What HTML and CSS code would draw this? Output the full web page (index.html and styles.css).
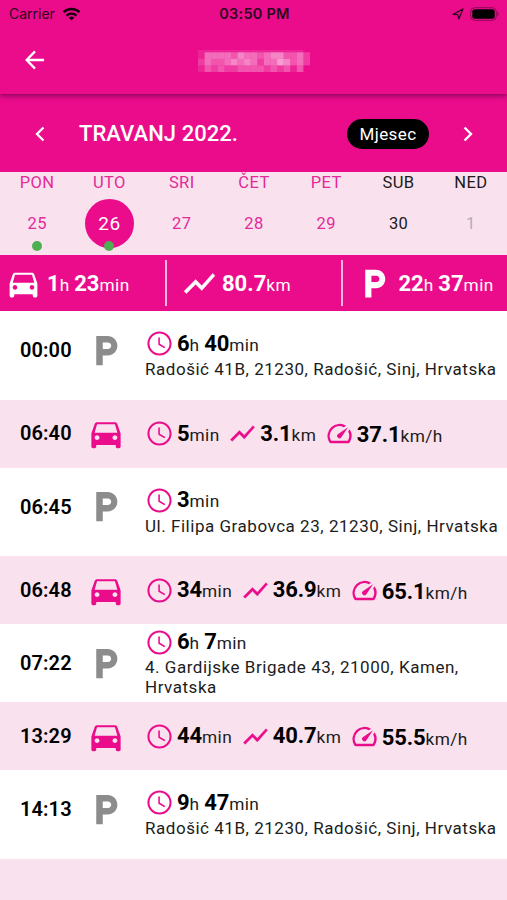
FILE: index.html
```
<!DOCTYPE html>
<html lang="hr">
<head>
<meta charset="utf-8">
<title>Travanj 2022.</title>
<link rel="stylesheet" href="styles.css">
</head>
<body>
<svg class="defs" aria-hidden="true">
  <symbol id="car" viewBox="0 0 24 24"><path d="M18.92 6.01C18.72 5.42 18.16 5 17.5 5h-11c-.66 0-1.21.42-1.42 1.01L3 12v8c0 .55.45 1 1 1h1c.55 0 1-.45 1-1v-1h12v1c0 .55.45 1 1 1h1c.55 0 1-.45 1-1v-8l-2.08-5.99zM6.5 16c-.83 0-1.5-.67-1.5-1.5S5.67 13 6.5 13s1.5.67 1.5 1.5S7.33 16 6.5 16zm11 0c-.83 0-1.5-.67-1.5-1.5s.67-1.5 1.5-1.5 1.5.67 1.5 1.5-.67 1.5-1.5 1.5zM5 11.5l1.5-5.2h11L19 11.5H5z"/></symbol>
  <symbol id="parking" viewBox="0 0 24 24"><path d="M13 3H6v18h4v-6h3c3.31 0 6-2.69 6-6s-2.69-6-6-6zm.2 8H10V7h3.2c1.1 0 2 .9 2 2s-.9 2-2 2z"/></symbol>
  <symbol id="clock" viewBox="0 0 24 24"><path d="M12 2C6.5 2 2 6.5 2 12s4.5 10 10 10 10-4.500 10-10S17.500 2 12 2zm0 18.300c-4.600 0-8.300-3.700-8.300-8.300S7.400 3.700 12 3.700s8.300 3.700 8.300 8.300-3.700 8.300-8.300 8.300zM12.300 7H11v6l5 3 .8-1.200-4.500-2.600z"/></symbol>
  <symbol id="chart" viewBox="0 0 24 24"><path d="M3.500 18.490l6-6.010 4 4L22 6.920l-1.410-1.410-7.090 7.970-4-4L2 16.990z" stroke="currentColor" stroke-width=".3"/></symbol>
  <symbol id="speed" viewBox="0 0 24 24"><path d="M20.380 8.570l-1.230 1.850a8 8 0 0 1-.22 7.580H5.070A8 8 0 0 1 15.580 6.850l1.850-1.230A10 10 0 0 0 3.350 19a2 2 0 0 0 1.720 1h13.850a2 2 0 0 0 1.740-1 10 10 0 0 0-.27-10.440zm-9.790 6.840a2 2 0 0 0 2.830 0l5.660-8.490-8.490 5.660a2 2 0 0 0 0 2.830z"/></symbol>
</svg>

<header class="app-bar">
  <div class="status">
    <div class="carrier">Carrier
      <svg class="wifi" viewBox="0 0 18 14"><g fill="none" stroke="currentColor" stroke-width="2.400"><path d="M1 5.200a11.500 11.500 0 0 1 16 0"/><path d="M4 8.600a7.200 7.200 0 0 1 10 0"/></g><path d="M9 13.500L6.200 10.800a4 4 0 0 1 5.600 0z"/></svg>
    </div>
    <div class="time">03:50 PM</div>
    <div class="indicators">
      <svg class="location" viewBox="0 0 12 12"><path d="M1 6.400L11 1 6.800 11 5.800 6.700z" fill="none" stroke="currentColor" stroke-width="1.200" stroke-linejoin="round"/></svg>
      <svg class="battery" viewBox="0 0 30 14"><rect x=".7" y=".7" width="25.600" height="12.600" rx="4" fill="none" stroke="currentColor" stroke-opacity=".4"/><rect x="2.300" y="2.300" width="22.400" height="9.400" rx="2.500"/><path d="M27.500 5v4c1.600-.7 1.600-3.300 0-4z" opacity=".45"/></svg>
    </div>
  </div>
  <div class="title-bar">
    <svg class="back" viewBox="0 0 22 22"><path d="M21 11H2M11 1.500L1.800 11l9.200 9.500" fill="none" stroke="currentColor" stroke-width="2.500"/></svg>
    <svg class="redacted" id="redacted" viewBox="0 -.35 17 3.35" preserveAspectRatio="none"></svg>
  </div>
</header>

<section class="month">
  <svg class="chevron" viewBox="0 0 10 16"><path d="M8.500 1.500L2 8l6.500 6.500"/></svg>
  <h1>TRAVANJ 2022.</h1>
  <button class="mode">Mjesec</button>
  <svg class="chevron" viewBox="0 0 10 16"><path d="M1.500 1.500L8 8l-6.500 6.500"/></svg>
</section>

<section class="week">
  <div class="day marked"><span class="name">PON</span><span class="num">25</span></div>
  <div class="day marked selected"><span class="name">UTO</span><span class="num">26</span></div>
  <div class="day"><span class="name">SRI</span><span class="num">27</span></div>
  <div class="day"><span class="name">ČET</span><span class="num">28</span></div>
  <div class="day"><span class="name">PET</span><span class="num">29</span></div>
  <div class="day weekend"><span class="name">SUB</span><span class="num">30</span></div>
  <div class="day weekend outside"><span class="name">NED</span><span class="num">1</span></div>
</section>

<section class="summary">
  <div class="total drive"><svg><use href="#car"/></svg><span><b>1</b>h <b>23</b>min</span></div>
  <div class="total distance"><svg><use href="#chart"/></svg><span><b>80.7</b>km</span></div>
  <div class="total parked"><svg><use href="#parking"/></svg><span><b>22</b>h <b>37</b>min</span></div>
</section>

<main class="log">
  <article class="entry stop"><time>00:00</time><svg class="kind"><use href="#parking"/></svg>
    <div class="info"><div class="stats"><svg><use href="#clock"/></svg><span><b>6</b>h <b>40</b>min</span></div><p>Radošić 41B, 21230, Radošić, Sinj, Hrvatska</p></div></article>
  <article class="entry trip"><time>06:40</time><svg class="kind"><use href="#car"/></svg>
    <div class="stats"><svg><use href="#clock"/></svg><span><b>5</b>min</span><svg><use href="#chart"/></svg><span><b>3.1</b>km</span><svg><use href="#speed"/></svg><span class="velocity"><b>37.1</b>km/h</span></div></article>
  <article class="entry stop"><time>06:45</time><svg class="kind"><use href="#parking"/></svg>
    <div class="info"><div class="stats"><svg><use href="#clock"/></svg><span><b>3</b>min</span></div><p>Ul. Filipa Grabovca 23, 21230, Sinj, Hrvatska</p></div></article>
  <article class="entry trip"><time>06:48</time><svg class="kind"><use href="#car"/></svg>
    <div class="stats"><svg><use href="#clock"/></svg><span><b>34</b>min</span><svg><use href="#chart"/></svg><span><b>36.9</b>km</span><svg><use href="#speed"/></svg><span class="velocity"><b>65.1</b>km/h</span></div></article>
  <article class="entry stop tall"><time>07:22</time><svg class="kind"><use href="#parking"/></svg>
    <div class="info"><div class="stats"><svg><use href="#clock"/></svg><span><b>6</b>h <b>7</b>min</span></div><p>4. Gardijske Brigade 43, 21000, Kamen, Hrvatska</p></div></article>
  <article class="entry trip"><time>13:29</time><svg class="kind"><use href="#car"/></svg>
    <div class="stats"><svg><use href="#clock"/></svg><span><b>44</b>min</span><svg><use href="#chart"/></svg><span><b>40.7</b>km</span><svg><use href="#speed"/></svg><span class="velocity"><b>55.5</b>km/h</span></div></article>
  <article class="entry stop"><time>14:13</time><svg class="kind"><use href="#parking"/></svg>
    <div class="info"><div class="stats"><svg><use href="#clock"/></svg><span><b>9</b>h <b>47</b>min</span></div><p>Radošić 41B, 21230, Radošić, Sinj, Hrvatska</p></div></article>
</main>
<script src="mosaic.js"></script>
</body>
</html>
```
FILE: mosaic.js
```
// Opacity of each cell of the obscured title, one digit per cell.
const rows = [
  { y: -0.35, height: 0.35, levels: "11111111111111110" },
  { y: 0, height: 1, levels: "14444354434553342" },
  { y: 1, height: 1, levels: "24334545424465342" },
  { y: 2, height: 1, levels: "13232233332323130" },
];
const target = document.getElementById("redacted");
for (const { y, height, levels } of rows) {
  [...levels].forEach((level, x) => {
    const cell = document.createElementNS("http://www.w3.org/2000/svg", "rect");
    cell.setAttribute("x", x);
    cell.setAttribute("y", y);
    cell.setAttribute("width", 1);
    cell.setAttribute("height", height);
    cell.setAttribute("fill-opacity", level / 10);
    target.append(cell);
  });
}
```
FILE: styles.css
```
:root {
  --pink: #eb0c8c;
  --pale: #f9e2ee;
}

* { box-sizing: border-box; }

body {
  margin: 0;
  height: 900px;
  overflow: hidden;
  background: var(--pale);
  color: #1c1c1c;
  font-family: Roboto, "Liberation Sans", sans-serif;
}

svg { fill: currentColor; flex: none; }
.defs { display: none; }

.app-bar {
  position: relative;
  height: 94px;
  background: var(--pink);
  box-shadow: 0 2px 5px rgba(70, 0, 60, .6);
}

.status {
  display: grid;
  grid-template-columns: 1fr auto 1fr;
  align-items: center;
  height: 27px;
  padding: 0 7px 0 9px;
  color: #2b0820;
  font: 14px Inter, sans-serif;
}
.carrier { display: flex; align-items: center; gap: 7px; }
.wifi { width: 19px; height: 14px; color: #16000d; }
.time { font-size: 14.5px; font-weight: 600; letter-spacing: .25px; }
.indicators { display: flex; align-items: center; justify-content: flex-end; gap: 6px; }
.location { width: 12px; height: 12px; }
.battery { width: 30px; height: 14px; color: #000; }

.title-bar {
  display: grid;
  grid-template-columns: 60px 1fr 60px;
  align-items: center;
  height: 66px;
  color: #fff;
}
.back { width: 20px; height: 20px; margin-left: 25px; }
.redacted { width: 112px; height: 22px; margin-top: 2px; justify-self: center; }

.month {
  display: flex;
  align-items: center;
  height: 78px;
  padding: 1px 34px 0 35px;
  background: var(--pink);
  color: #fff;
}
.chevron { width: 10px; height: 16px; fill: none; stroke: #fff; stroke-width: 2.3; }
.month h1 { margin: 0 auto 0 34px; font-size: 22px; font-weight: 500; letter-spacing: .05px; }
.mode {
  width: 82px;
  height: 30px;
  margin-right: 34px;
  padding: 0;
  border: 0;
  border-radius: 15px;
  background: #000;
  color: #fff;
  font: 17px Roboto, sans-serif;
  letter-spacing: .4px;
}

.week {
  display: grid;
  grid-template-columns: repeat(7, 1fr);
  height: 83px;
  padding-left: 1px;
  color: #e32a98;
}
.day { position: relative; display: flex; flex-direction: column; align-items: center; }
.name { height: 27px; line-height: 21px; font-size: 16.5px; letter-spacing: .4px; }
.num { width: 49px; height: 49px; border-radius: 50%; line-height: 50px; text-align: center; font-size: 16.5px; letter-spacing: .4px; }
.selected .num { background: var(--pink); color: #fff; font-size: 19px; }
.marked::after {
  content: "";
  position: absolute;
  top: 69px;
  width: 10px;
  height: 10px;
  border-radius: 50%;
  background: #4caf50;
}
.weekend { color: #201a20; }
.outside .num { color: #b5abb2; }

.summary {
  display: grid;
  grid-template-columns: 165px 175.5px 1fr;
  height: 56px;
  padding: 5px 0;
  background: var(--pink);
  color: #fff;
}
.total { display: flex; align-items: center; font-size: 17.3px; letter-spacing: .4px; white-space: nowrap; }
.total + .total { border-left: 2px solid #f9b3dc; }
.total b { font-size: 22px; letter-spacing: 0; }
.total svg { width: 37px; height: 37px; }
.drive { padding-left: 5px; gap: 5px; }
.distance { padding-left: 14px; gap: 4px; }
.parked { padding-left: 13px; gap: 6px; }

.log { line-height: 1.17; }
.entry { display: grid; grid-template-columns: 86px 59px 1fr; align-items: center; }
.stop { height: 88.5px; background: #fff; }
.tall { height: 78px; }
.trip { height: 68px; background: var(--pale); }
time { padding: 1px 0 0 20px; color: #000; font-size: 20px; font-weight: 600; letter-spacing: .1px; }
.kind { width: 40px; height: 39px; }
.stop .kind { color: #8c8c8c; }
.stop:not(.tall) time, .stop:not(.tall) .kind { margin-bottom: 10px; }
.trip .kind { color: var(--pink); }
.stats { display: flex; align-items: center; height: 28px; font-size: 17.3px; letter-spacing: .4px; white-space: nowrap; }
.stats b { color: #000; font-size: 22px; letter-spacing: -.1px; }
.stats svg { width: 29px; height: 29px; margin-right: 3px; color: var(--pink); }
.stats span + svg { margin-left: 8.5px; }
.velocity { padding-top: 3px; }
.info .stats { margin-top: -2px; padding-bottom: 1px; height: 30px; }
.tall .info .stats { margin-top: -1px; height: 29px; }
.info p { margin: 0; font-size: 17px; line-height: 20px; letter-spacing: .53px; }
```
